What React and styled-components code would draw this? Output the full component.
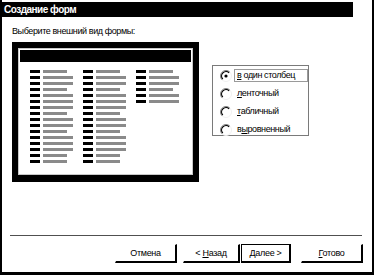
import React from "react";
import styled, { createGlobalStyle } from "styled-components";

const Global = createGlobalStyle`
  html, body { margin: 0; padding: 0; background: #fff; }
  body { font-family: "Liberation Sans", Arial, sans-serif; }
  * { box-sizing: border-box; }
`;

const Window = styled.div`
  width: 374px;
  height: 275px;
  border-left: 2px solid #000;
  border-right: 2px solid #000;
  border-bottom: 3px solid #000;
  padding-top: 2px;
  display: flex;
  flex-direction: column;
  background: #fff;
`;

const TitleBar = styled.div`
  height: 15px;
  margin-right: 19px;
  background: #000;
  color: #fff;
  font-weight: bold;
  font-size: 10px;
  letter-spacing: -0.5px;
  line-height: 15px;
  padding-left: 2px;
  white-space: nowrap;
`;

const Body = styled.div`
  flex: 1;
  display: flex;
  flex-direction: column;
  padding-left: 10px;
`;

const Prompt = styled.div`
  margin-top: 8px;
  font-size: 9px;
  letter-spacing: -0.4px;
  line-height: 12px;
  color: #000;
`;

const MainRow = styled.div`
  display: flex;
  margin-top: 5px;
`;

const Preview = styled.div`
  width: 187px;
  height: 140px;
  border: 6px solid #000;
  border-bottom-width: 7px;
  background: #000;
`;

const PreviewInner = styled.div`
  height: 100%;
  background: #fff;
  border: 1px solid #c8c8c8;
  display: flex;
  flex-direction: column;
  padding: 1px;
`;

const FormTitle = styled.div`
  height: 12px;
  background: #000;
`;

const Columns = styled.div`
  display: flex;
  gap: 10px;
  padding: 8px 0 0 10px;
`;

const Column = styled.div`
  display: flex;
  flex-direction: column;
  gap: 3px;
  width: 43px;
`;

const FieldRow = styled.div`
  display: flex;
  gap: 3px;
  height: 3px;
`;

const FieldLabel = styled.div`
  width: 10px;
  height: 3px;
  background: #000;
`;

const FieldBox = styled.div`
  width: ${(p) => (p.$short ? 24 : 30)}px;
  height: 3px;
  background: #8a8a8a;
`;

const RadioGroup = styled.div`
  margin-left: 13px;
  margin-top: 23px;
  width: 97px;
  height: 71px;
  border: 1px solid #7a7a7a;
  display: flex;
  flex-direction: column;
  padding: 3px 0 0 7px;
  gap: 5px;
`;

const RadioRow = styled.div`
  display: flex;
  align-items: center;
  height: 13px;
  gap: 2px;
  font-size: 9px;
  letter-spacing: -0.4px;
  color: #000;
`;

const RadioLabel = styled.span`
  padding: 0 2px;
  line-height: 11px;
  border: 1px solid ${(p) => (p.$focus ? "#9a9a9a" : "transparent")};
  white-space: nowrap;
  width: ${(p) => (p.$focus ? "74px" : "auto")};
  u { text-decoration: underline; }
`;

const Separator = styled.div`
  height: 2px;
  margin: 0 10px 0 8px;
  border-top: 1px solid #505050;
  border-bottom: 1px solid #fff;
`;

const ButtonRow = styled.div`
  display: flex;
  justify-content: flex-end;
  align-items: flex-start;
  padding: 7px 9px 7px 0;
  height: 35px;
`;

const Button = styled.div`
  width: ${(p) => p.$w}px;
  margin-left: ${(p) => p.$ml || 0}px;
  height: 19px;
  background: #fff;
  border-top: 1px solid ${(p) => (p.$default ? "#000" : "#fff")};
  border-left: 1px solid ${(p) => (p.$default ? "#000" : "#fff")};
  border-right: 2px solid #000;
  border-bottom: 2px solid #000;
  font-size: 9px;
  letter-spacing: -0.3px;
  line-height: 16px;
  text-align: center;
  color: #000;
`;

function Radio({ checked }) {
  return (
    <svg width="12" height="12" viewBox="0 0 12 12">
      <path d="M2.11 9.89 A5.5 5.5 0 0 1 9.89 2.11" fill="none" stroke="#808080" strokeWidth="1" />
      <path d="M2.82 9.18 A4.5 4.5 0 0 1 9.18 2.82" fill="none" stroke="#000" strokeWidth="1.2" />
      <path d="M9.89 2.11 A5.5 5.5 0 0 1 2.11 9.89" fill="none" stroke="#f0f0f0" strokeWidth="1" />
      {checked && <circle cx="6" cy="6" r="1.6" fill="#000" />}
    </svg>
  );
}

const pattern = "SLLSLLLSLLSLLLSS".split("");
const col3 = "SLLSLL".split("");

function FieldColumn({ items }) {
  return (
    <Column>
      {items.map((t, i) => (
        <FieldRow key={i}>
          <FieldLabel />
          <FieldBox $short={t === "S"} />
        </FieldRow>
      ))}
    </Column>
  );
}

export default function App() {
  return (
    <>
      <Global />
      <Window>
        <TitleBar>Создание форм</TitleBar>
        <Body>
          <Prompt>Выберите внешний вид формы:</Prompt>
          <MainRow>
            <Preview>
              <PreviewInner>
                <FormTitle />
                <Columns>
                  <FieldColumn items={pattern} />
                  <FieldColumn items={pattern} />
                  <FieldColumn items={col3} />
                </Columns>
              </PreviewInner>
            </Preview>
            <RadioGroup>
              <RadioRow>
                <Radio checked />
                <RadioLabel $focus><u>в</u> один столбец</RadioLabel>
              </RadioRow>
              <RadioRow>
                <Radio />
                <RadioLabel><u>л</u>енточный</RadioLabel>
              </RadioRow>
              <RadioRow>
                <Radio />
                <RadioLabel><u>т</u>абличный</RadioLabel>
              </RadioRow>
              <RadioRow>
                <Radio />
                <RadioLabel>в<u>ы</u>ровненный</RadioLabel>
              </RadioRow>
            </RadioGroup>
          </MainRow>
        </Body>
        <Separator />
        <ButtonRow>
          <Button $w={62}>Отмена</Button>
          <Button $w={57} $ml={6}>&lt; <u>Н</u>азад</Button>
          <Button $w={50} $ml={1} $default><u>Д</u>алее &gt;</Button>
          <Button $w={62} $ml={10}><u>Г</u>отово</Button>
        </ButtonRow>
      </Window>
    </>
  );
}
